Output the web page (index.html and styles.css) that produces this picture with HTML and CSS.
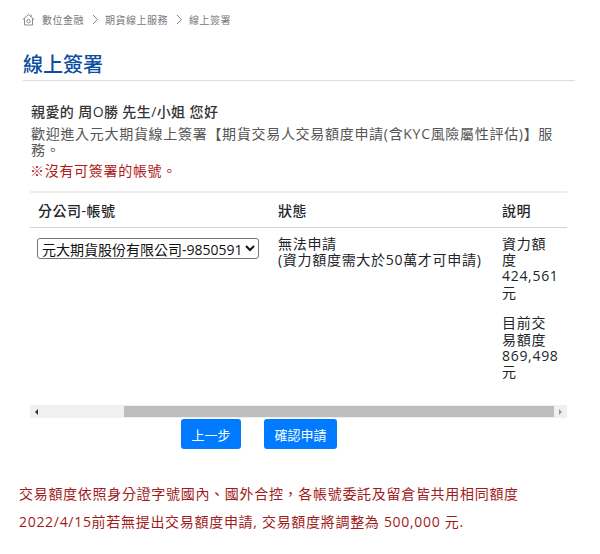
FILE: index.html
```html
<!DOCTYPE html>
<html lang="zh-Hant">
<head>
<meta charset="utf-8">
<title>線上簽署</title>
<link rel="stylesheet" href="styles.css">
</head>
<body>
<nav class="crumbs">
  <svg class="home" width="13" height="13" viewBox="0 0 13 13" fill="none" stroke="#8a8a8a" stroke-width="1"><path d="M.8 6.6 6.5 1.4l5.7 5.2M2.5 5.4v6.6h8V5.4M9.2 1.8v2"/><circle cx="6.5" cy="8.2" r="1.7"/></svg>
  <span>數位金融</span>
  <svg class="sep" width="7" height="11" viewBox="0 0 7 11" fill="none" stroke="#8a8a8a"><path d="M1 1l4.6 4.5L1 10"/></svg>
  <span>期貨線上服務</span>
  <svg class="sep" width="7" height="11" viewBox="0 0 7 11" fill="none" stroke="#8a8a8a"><path d="M1 1l4.6 4.5L1 10"/></svg>
  <span>線上簽署</span>
</nav>
<h1 class="title">線上簽署</h1>
<main class="content">
  <p class="greet">親愛的 周O勝 先生/小姐 您好</p>
  <p class="intro">歡迎進入元大期貨線上簽署【期貨交易人交易額度申請(含KYC風險屬性評估)】服務。</p>
  <p class="warn">※沒有可簽署的帳號。</p>
  <div class="table-wrap">
    <table class="accounts">
      <thead>
        <tr><th class="c1">分公司-帳號</th><th class="c2">狀態</th><th class="c3">說明</th></tr>
      </thead>
      <tbody>
        <tr>
          <td class="c1"><select class="acct"><option>元大期貨股份有限公司-9850591</option></select></td>
          <td class="c2">無法申請<br>(資力額度需大於50萬才可申請)</td>
          <td class="c3"><p class="note">資力額度<br>424,561<br>元</p><p class="note">目前交易額度<br>869,498<br>元</p></td>
        </tr>
      </tbody>
    </table>
    <div class="scrollbar">
      <span class="arrow left"></span>
      <div class="track"><div class="thumb"></div></div>
      <span class="arrow right"></span>
    </div>
  </div>
  <div class="actions">
    <button class="btn">上一步</button>
    <button class="btn">確認申請</button>
  </div>
</main>
<footer class="notice">
  <p>交易額度依照身分證字號國內、國外合控，各帳號委託及留倉皆共用相同額度</p>
  <p>2022/4/15前若無提出交易額度申請, 交易額度將調整為 500,000 元.</p>
</footer>
</body>
</html>
```
FILE: styles.css
```css
* { box-sizing: border-box; }
html, body { margin: 0; padding: 0; }
body {
  width: 600px;
  height: 554px;
  overflow: hidden;
  background: #fff;
  color: #212529;
  font-family: "Open Sans", "Noto Sans CJK TC", sans-serif;
  font-size: 14px;
  letter-spacing: .7px;
}
p { margin: 0; }
.crumbs {
  display: flex;
  align-items: center;
  height: 12px;
  margin: 13px 0 0 22px;
  color: #777;
  font-size: 10px;
  letter-spacing: .5px;
}
.home { margin-right: 7px; }
.sep { margin: 0 6px 0 8px; }
.title {
  margin: 27px 25px 0 23px;
  padding-bottom: 3px;
  height: 29px;
  border-bottom: 1px solid #ddd;
  color: #0b4ea2;
  font-size: 20px;
  line-height: 25px;
  font-weight: 500;
  letter-spacing: 0;
}
.content { padding: 22px 33px 0 30px; }
.greet { color: #333; font-weight: 500; letter-spacing: .4px; line-height: 17px; margin-left: 1px; margin-bottom: 6px; }
.intro { color: #555; line-height: 16px; margin-left: 1px; width: 530px; }
.warn { color: #b01818; line-height: 18px; margin-top: 4px; margin-bottom: 11px; }
.table-wrap { width: 537px; }
.accounts {
  width: 537px;
  table-layout: fixed;
  border-collapse: collapse;
  color: #212529;
}
.c1 { width: 240px; }
.c2 { width: 224px; }
.c3 { width: 73px; }
.accounts th {
  height: 35px;
  padding: 0 8px;
  text-align: left;
  font-weight: 500;
  letter-spacing: .5px;
  border-top: 2px solid #eee;
  border-bottom: 1px solid #ccd3e0;
}
.accounts td {
  vertical-align: top;
  padding: 8px 8px 0;
  line-height: 16.4px;
  height: 178px;
}
.accounts td.c1 { padding-left: 7px; padding-top: 10px; }
.note + .note { margin-top: 14px; }
.acct {
  width: 222px;
  height: 21px;
  padding: 0;
  font: inherit;
  font-size: 14px;
  color: #111;
  background: #fff;
  border: 1px solid #767676;
  border-radius: 3px;
}
.scrollbar {
  display: flex;
  align-items: center;
  height: 13px;
  background: #f0f0f0;
}
.arrow { flex: none; width: 13px; height: 13px; display: flex; align-items: center; justify-content: center; }
.arrow::before { content: ""; border: 3px solid transparent; }
.left::before { border-right-color: #333; border-left-width: 0; }
.right::before { border-left-color: #999; border-right-width: 0; }
.track { flex: 1; height: 11px; padding-left: 81px; }
.thumb { height: 11px; background: #bdbdbd; }
.actions {
  display: flex;
  gap: 23px;
  margin: 1px 0 0 151px;
}
.btn {
  height: 30px;
  width: 60px;
  padding: 0;
  border: 0;
  border-radius: 3px;
  background: #007bff;
  color: #fff;
  font: inherit;
  font-size: 13px;
  letter-spacing: 0;
}
.btn + .btn { width: 73px; }
.notice { margin: 31px 0 0 19px; color: #a01c1c; line-height: 28px; }
```
